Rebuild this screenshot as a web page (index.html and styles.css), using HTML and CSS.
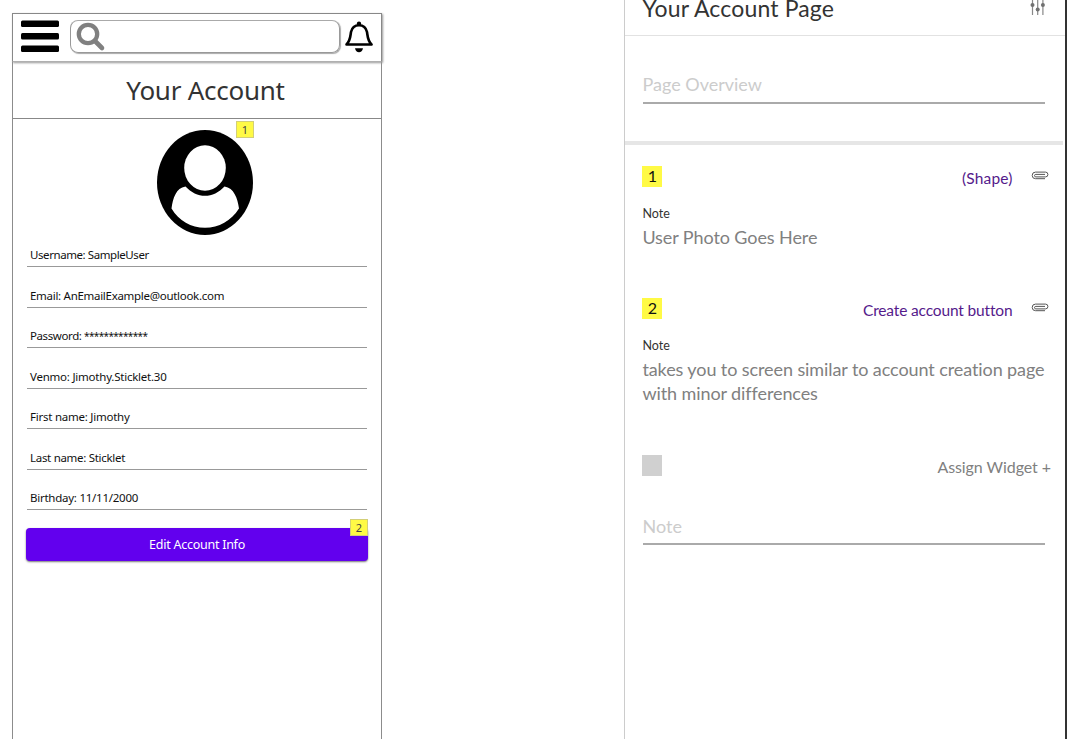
FILE: index.html
```html
<!DOCTYPE html>
<html lang="en">
<head>
<meta charset="utf-8">
<title>Your Account Page</title>
<link rel="stylesheet" href="styles.css">
</head>
<body>
<main class="workspace">
  <section class="phone">
    <header class="topbar">
      <svg class="menu" viewBox="0 0 38 32"><rect y="0.5" width="38" height="6.5" rx="1.5"/><rect y="13" width="38" height="6.5" rx="1.5"/><rect y="25.5" width="38" height="6.5" rx="1.5"/></svg>
      <div class="search">
        <svg class="lens" viewBox="0 0 30 30"><circle cx="12" cy="12" r="9.2" fill="none" stroke="#808080" stroke-width="4.3"/><path d="M19.5 19.5L26 26" stroke="#808080" stroke-width="4.6" stroke-linecap="round"/></svg>
      </div>
      <svg class="bell" viewBox="0 0 28 32"><path d="M1.500 23.500C5.500 19.500 5.300 15 6 11C7 6.500 10 4.200 14 4.200S21 6.500 22 11C22.700 15 22.500 19.500 26.500 23.500Z" fill="none" stroke="#000" stroke-width="2.600" stroke-linejoin="round"/><circle cx="14" cy="2.7" r="2.2"/><path d="M10 27.3H18C17.5 30 16 31.2 14 31.2S10.5 30 10 27.3Z"/></svg>
    </header>
    <h1 class="title"><span>Your Account</span></h1>
    <div class="avatar-wrap">
      <svg class="avatar" viewBox="0 0 96 105"><ellipse cx="48" cy="52.5" rx="48" ry="52.5"/><ellipse cx="48" cy="38" rx="20.8" ry="22.8" fill="#fff"/><path d="M28.5 56.5C34 62.500 41 65.800 48 65.800S62 62.500 67.500 56.500C77 58 80.500 68 82 78.500C74 91 62 97.800 48 97.800S22 91 14.500 78.500C16 68 19 58 28.500 56.500Z" fill="#fff"/></svg>
      <span class="flag flag-photo">1</span>
    </div>
    <ul class="fields">
      <li><span class="f1">Username: SampleUser</span></li>
      <li><span class="f2">Email: AnEmailExample@outlook.com</span></li>
      <li><span class="f3">Password: <span class="mask">*************</span></span></li>
      <li><span class="f4">Venmo: Jimothy.Sticklet.30</span></li>
      <li><span class="f5">First name: Jimothy</span></li>
      <li><span class="f6">Last name: Sticklet</span></li>
      <li><span class="f7">Birthday: 11/11/2000</span></li>
    </ul>
    <div class="edit"><span class="edit-label">Edit Account Info</span><span class="flag flag-edit">2</span></div>
  </section>

  <aside class="panel">
    <header class="panel-head">
      <h2><span class="head-label">Your Account Page</span></h2>
      <svg class="sliders" viewBox="0 0 16 18"><path d="M2.500 0V17M7.700 0V17M12.900 0V17" stroke="#888" stroke-width="1.2"/><g fill="#707070"><circle cx="2.500" cy="7" r="2"/><circle cx="7.700" cy="11.500" r="2"/><circle cx="12.900" cy="7" r="2"/></g></svg>
    </header>
    <div class="overview"><div class="input"><span class="ph-label">Page Overview</span></div></div>
    <article class="note first">
      <div class="note-head"><span class="num">1</span><span class="link l1">(Shape)</span>
        <svg class="clip" viewBox="0 0 18 9"><path d="M14 7.700H4.500A3.300 3.300 0 0 1 4.500 1.100H14.500A2.400 2.400 0 0 1 14.500 5.900H4.800A1.200 1.200 0 0 1 4.800 3.400H14" fill="none" stroke="#555" stroke-width="1"/></svg></div>
      <div class="cap"><span>Note</span></div>
      <p><span class="p1">User Photo Goes Here</span></p>
    </article>
    <article class="note second">
      <div class="note-head"><span class="num">2</span><span class="link l2">Create account button</span>
        <svg class="clip" viewBox="0 0 18 9"><path d="M14 7.700H4.500A3.300 3.300 0 0 1 4.500 1.100H14.500A2.400 2.400 0 0 1 14.500 5.900H4.800A1.200 1.200 0 0 1 4.800 3.400H14" fill="none" stroke="#555" stroke-width="1"/></svg></div>
      <div class="cap"><span>Note</span></div>
      <p><span class="p2">takes you to screen similar to account creation page</span><br><span class="p3">with minor differences</span></p>
    </article>
    <div class="assign"><span class="swatch"></span><span class="assign-label">Assign Widget +</span></div>
    <div class="input note-input"><span class="note-label">Note</span></div>
  </aside>
</main>
</body>
</html>
```
FILE: styles.css
```css
* { box-sizing: border-box; }
body { margin: 0; background: #fff; overflow: hidden; }
h1, h2, p, ul { margin: 0; padding: 0; font-weight: 400; list-style: none; }
svg { display: block; flex: none; }
.workspace { display: flex; justify-content: space-between; height: 739px; padding-left: 12px; font-family: "Noto Sans", sans-serif; }

.phone { width: 370px; margin-top: 13px; height: 726px; border: solid #8c8c8c; border-width: 0 1px; }
.topbar { display: flex; align-items: flex-start; height: 49px; margin: 0 -1px; padding: 7px 8px 0; border: 1px solid #888; border-bottom-color: #b0b0b0; box-shadow: 1px 1px 2px #999; }
.menu { width: 38px; height: 32px; margin-top: -1px; }
.search { width: 270px; height: 33px; margin: -1px 5px 0 11px; padding: 0 0 0 5px; border: 1px solid #999; border-top-color: #aaa; border-radius: 8px; box-shadow: 1px 1px 1px #aaa; flex: none; }
.lens { width: 30px; height: 30px; margin-top: 1px; }
.bell { width: 28px; height: 32px; }
.title { height: 57px; border-bottom: 1px solid #888; text-align: center; font-size: 26px; line-height: 57px; color: #333; padding-left: 17px; letter-spacing: -0.25px; }
.avatar-wrap { position: relative; height: 117px; padding: 11px 0 0 144px; }
.avatar { width: 96px; height: 105px; }
.flag { position: absolute; width: 18px; height: 17px; border: 1px solid #d3cf78; background: #fffa45; color: #444; font-size: 11px; line-height: 15px; text-align: center; }
.flag-photo { left: 223px; top: 2px; }
.fields { padding: 0 14px; }
.fields li { height: 40.500px; padding-left: 3px; font-size: 11.500px; line-height: 16px; color: #111; display: flex; flex-direction: column; justify-content: flex-end; border-bottom: 1px solid #999; padding-bottom: 3px; }
.fields li:first-child { height: 31px; }
.f1 { letter-spacing: -0.42px; }
.f2 { letter-spacing: -0.29px; }
.f3 { letter-spacing: -0.4px; }
.mask { font-size: 10px; letter-spacing: -0.650px; }
.f4 { letter-spacing: -0.23px; }
.f5 { letter-spacing: -0.24px; }
.f6 { letter-spacing: -0.300px; }
.f7 { letter-spacing: -0.25px; }
.edit { position: relative; height: 33px; margin: 18px 13px 0; border-radius: 4px; background: #6200ee; box-shadow: 0 1px 2px #777; color: #fff; font-size: 12.500px; line-height: 33px; text-align: center; letter-spacing: -0.25px; }
.flag-edit { right: 0; top: -9px; letter-spacing: 0; }

.panel { width: 443px; border-left: 1px solid #ccc; border-right: 2px solid #333; font-family: Lato, sans-serif; color: #808080; font-variant-ligatures: none; }
.panel-head { display: flex; justify-content: space-between; height: 36px; border-bottom: 1px solid #e2e2e2; padding: 0 19px 0 17.500px; }
.panel-head h2 { color: #333; font-size: 23px; line-height: 28px; margin-top: -6px; letter-spacing: 0.15px; }
.sliders { width: 16px; height: 18px; margin-top: -2px; }
.overview { height: 109px; border-bottom: 4px solid #e6e6e6; padding-top: 36px; margin-right: 2px; }
.input { width: 402px; height: 32px; margin-left: 17.500px; border-bottom: 2px solid #aaa; color: #ccc; font-size: 18px; line-height: 25px; }
.note { padding: 0 16.500px 0 17.400px; }
.first { height: 132px; padding-top: 21px; }
.second { height: 156px; padding-top: 21px; }
.note-head { display: flex; height: 31px; }
.num { width: 20px; height: 21px; background: #fffa45; color: #111; font-size: 16px; line-height: 20px; text-align: center; }
.link { margin-left: auto; margin-right: 18px; font-size: 15.500px; line-height: 24px; color: #551a8b; }
.l1 { letter-spacing: 0.15px; }
.l2 { letter-spacing: -0.15px; }
.clip { width: 18px; height: 9px; margin-top: 5px; }
.cap { height: 28px; font-size: 12.500px; line-height: 33px; color: #333; }
.note p { font-size: 18px; line-height: 24px; white-space: nowrap; letter-spacing: -0.09px; }
.assign { display: flex; justify-content: space-between; padding: 22px 14px 0 17.400px; height: 81px; }
.swatch { width: 20px; height: 21px; background: #d0d0d0; }
.assign-label { font-size: 16px; line-height: 23px; letter-spacing: -0.07px; }
.note-input { height: 31px; line-height: 24px; }
```
